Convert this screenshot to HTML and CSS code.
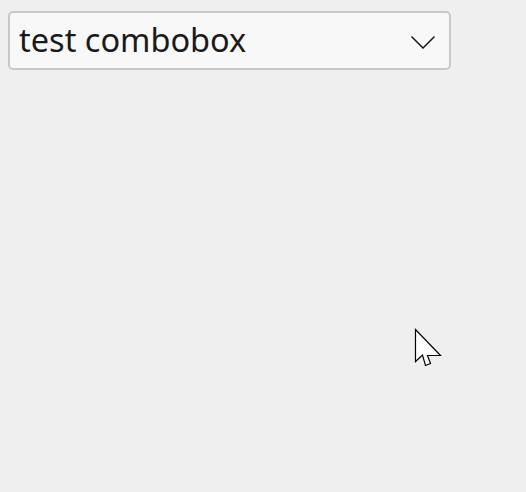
FILE: index.html
```html
<!DOCTYPE html>
<html>
<head>
<meta charset="utf-8">
<link rel="stylesheet" href="styles.css">
</head>
<body>
<div class="combo">
  <span class="combo-text">test combobox</span>
  <svg class="chevron" width="26" height="14" viewBox="0 0 26 14"><polyline points="1.5,1.5 13,13 24.5,1.5" fill="none" stroke="#1a1a1a" stroke-width="1.5"/></svg>
</div>
<svg class="cursor" width="30" height="42" viewBox="0 0 30 42"><polygon points="1.5,1.5 1.5,33.5 8.5,27 11.5,37.5 16.5,35.5 13.5,27.5 26.5,27.5" fill="#fff" stroke="#000" stroke-width="1.2" stroke-linejoin="miter"/></svg>
</body>
</html>
```
FILE: styles.css
```css
html, body {
  margin: 0;
  padding: 0;
  background: #efefef;
  width: 526px;
  height: 492px;
  overflow: hidden;
}
body {
  position: relative;
  padding: 11px 0 0 8px;
  box-sizing: border-box;
  font-family: "Noto Sans", "Open Sans", sans-serif;
}
.combo {
  box-sizing: border-box;
  width: 443px;
  height: 59px;
  border: 2px solid #c8c8c8;
  border-radius: 5px;
  background: #f8f8f8;
  display: flex;
  align-items: center;
  justify-content: space-between;
  padding: 0 13px 0 9px;
}
.combo-text {
  font-size: 32.5px;
  color: #1a1a1a;
  line-height: 1;
}
.chevron {
  display: block;
  margin-top: 2px;
}
.cursor {
  position: absolute;
  left: 414px;
  top: 328px;
}
```
